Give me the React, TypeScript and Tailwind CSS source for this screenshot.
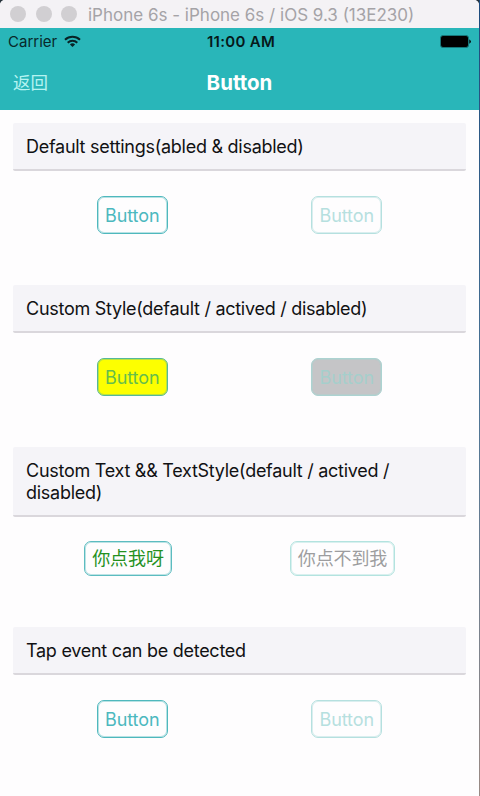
import type { ReactNode } from "react";

const tones = {
  normal: "h-[38px] border-[#4fb8bd] px-[7px] text-[#4cb8be]",
  faded: "h-[38px] border-[#b5e0df] px-[7px] text-[#b6e0df]",
  yellow: "h-[38px] border-[#55b89a] bg-[#fdff00] px-[7px] text-[#66bd4c]",
  gray: "h-[38px] border-[#acd3d1] bg-[#c5c5c7] px-[7px] text-[#a5cfcc]",
  green: "-mt-px h-[35px] border-[#5cbcc0] px-[7px] text-[#25911f]",
  mute: "-mt-px h-[35px] border-[#b3e3df] px-[7px] text-[#9d9d9f]",
};

const rings = {
  normal: "inset-ring-[#4fb8bd]/40",
  faded: "inset-ring-[#b5e0df]/50",
  yellow: "inset-ring-[#55b89a]/40",
  gray: "inset-ring-[#acd3d1]/50",
  green: "inset-ring-[#5cbcc0]/40",
  mute: "inset-ring-[#b3e3df]/50",
};

function Btn({ tone, width, children }: { tone: keyof typeof tones; width: string; children: ReactNode }) {
  return (
    <button
      className={`flex shrink-0 items-center justify-center whitespace-nowrap rounded-[7px] border inset-ring-1 pt-px text-[18px] leading-none tracking-[-0.1px] ${width} ${tones[tone]} ${rings[tone]}`}
    >
      {children}
    </button>
  );
}

function Section({ title, height, children }: { title: ReactNode; height: string; children: ReactNode }) {
  return (
    <section className={`mx-[13px] ${height}`}>
      <h2 className="rounded-[2px] border-b-2 border-[#dad7dc] bg-[#f5f4f8] px-[13px] pb-[11px] pt-[13px] text-[18px] leading-[22px] tracking-[-0.27px] text-[#111113]">
        {title}
      </h2>
      <div className="flex justify-around px-[12px] pt-[25px]">{children}</div>
    </section>
  );
}

export default function App() {
  return (
    <div className="flex h-[796px] w-[480px] overflow-hidden bg-[#26323a] font-[Inter,'Noto_Sans_CJK_SC',sans-serif]">
      <main className="flex w-[479px] flex-col overflow-hidden rounded-t-[5px] bg-[#fefdfe]">
        <div className="flex h-7 shrink-0 items-center bg-[#f4f2f5] pl-[10px]">
          <div className="flex gap-[9.5px]">
            <i className="size-4 rounded-full bg-[#d1cfd2]" />
            <i className="size-4 rounded-full bg-[#d1cfd2]" />
            <i className="size-4 rounded-full bg-[#d1cfd2]" />
          </div>
          <span className="ml-[11px] whitespace-nowrap pt-[3px] text-[17px] text-[#a5a3a7]">
            iPhone 6s - iPhone 6s / iOS 9.3 (13E230)
          </span>
        </div>
        <header className="h-[82px] shrink-0 bg-[#29b6b9]">
          <div className="grid h-[27px] grid-cols-3 items-center pl-2 pr-[8px] text-[15px] text-[#08292b]">
            <div className="flex items-center gap-[7px]">
              <span className="pt-px">Carrier</span>
              <svg width="17" height="13" viewBox="0 0 17 13" fill="none" stroke="#082326" strokeWidth="2">
                <path d="M1 4.8a10.8 10.8 0 0 1 15 0M3.7 7.7a7 7 0 0 1 9.6 0" />
                <path d="M8.5 12 5.9 9.4a3.8 3.8 0 0 1 5.2 0Z" fill="#082326" stroke="none" />
              </svg>
            </div>
            <span className="whitespace-nowrap pl-[3px] pt-px text-center font-semibold tracking-[0.3px] text-[#06191a]">11:00 AM</span>
            <svg className="justify-self-end" width="31" height="13" viewBox="0 0 31 13">
              <rect x=".5" y=".5" width="28" height="12" rx="2.5" fill="#000" stroke="#17777a" />
              <path d="M29.3 4.2q3.2 2.3 0 4.6Z" fill="#000" />
            </svg>
          </div>
          <div className="grid h-[55px] grid-cols-3 items-center px-[13px]">
            <span className="pt-px text-[17.5px] text-[#b5f3f1]">返回</span>
            <span className="pt-px text-center text-[20.5px] font-bold text-white">Button</span>
          </div>
        </header>
        <div className="pt-[13px]">
          <Section title="Default settings(abled & disabled)" height="h-[162px]">
            <Btn tone="normal" width="w-[71px]">Button</Btn>
            <Btn tone="faded" width="w-[71px]">Button</Btn>
          </Section>
          <Section title="Custom Style(default / actived / disabled)" height="h-[162px]">
            <Btn tone="yellow" width="w-[71px]">Button</Btn>
            <Btn tone="gray" width="w-[71px]">Button</Btn>
          </Section>
          <Section title={<>Custom Text && TextStyle(default / actived /<br />disabled)</>} height="h-[180px]">
            <Btn tone="green" width="w-[88px]">你点我呀</Btn>
            <Btn tone="mute" width="w-[105px]">你点不到我</Btn>
          </Section>
          <Section title="Tap event can be detected" height="h-[162px]">
            <Btn tone="normal" width="w-[71px]">Button</Btn>
            <Btn tone="faded" width="w-[71px]">Button</Btn>
          </Section>
        </div>
      </main>
      <aside className="w-px bg-linear-to-b from-[#1c4a7c] via-[#4b7496] to-[#9a8a84]" />
    </div>
  );
}
